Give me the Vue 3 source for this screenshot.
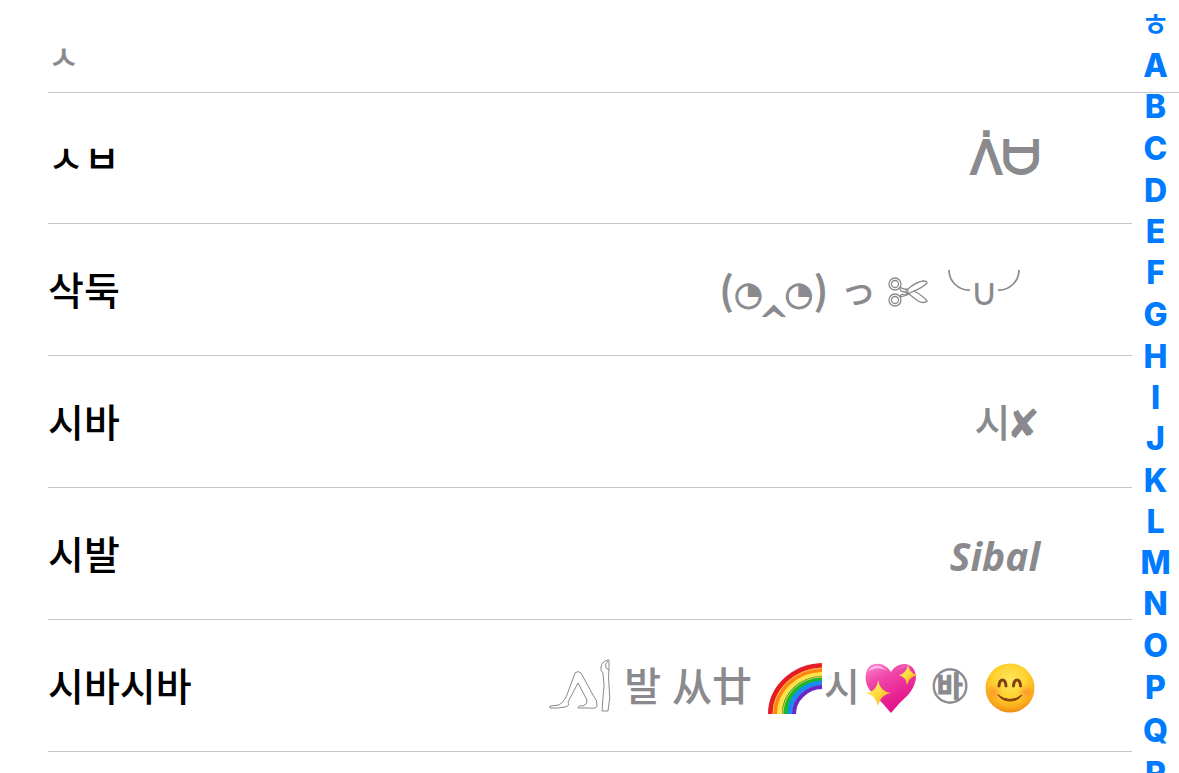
<script setup>
const letters = ['ㅎ', ...'ABCDEFGHIJKLMNOPQR']
const spacing = { C: 'round', G: 'round', O: 'round', J: 'hook', Q: 'tail' }
</script>

<template>
  <main class="page">
    <section class="shortcuts">
      <h2 id="s-group" class="heading">ㅅ</h2>
      <dl class="list" aria-labelledby="s-group">
        <div class="row first">
          <dt>ㅅㅂ</dt>
          <dd><span class="syllabics">ᐲᗨ</span></dd>
        </div>
        <div class="row">
          <dt>삭둑</dt>
          <dd class="face">
            <span class="paren">(</span><span class="eye">◔</span><span class="mouth">‸</span><span class="eye">◔</span><span class="paren">)</span>
            <span class="hand">っ</span>
            <svg class="scissors" viewBox="0 0 40 32" aria-label="✄" role="img">
              <g fill="none" stroke="#8a8a8e" stroke-width="1.3">
                <circle cx="7" cy="8" r="6" /><circle cx="7" cy="8" r="3.5" />
                <circle cx="7" cy="24" r="6" /><circle cx="7" cy="24" r="3.5" />
                <path d="M12 11Q15 14 20 13Q28 6 35 5Q39 5 39 7Q34 12 26 15L18 19Q12 17 12 21" />
                <path d="M12 11Q11 16 17 16L21 18L30 25Q36 28 39 25Q34 19 26 15M12 21Q17 20 21 18" />
                <circle cx="19" cy="16" r="1.3" />
              </g>
            </svg>
            <svg class="arc" viewBox="0 0 22 22" role="img" aria-label="◟"><path d="M1 0A20 20 0 0 0 22 20" fill="none" stroke="#8a8a8e" stroke-width="1.700" /></svg><span class="cup">∪</span><svg class="arc" viewBox="0 0 22 22" role="img" aria-label="◞"><path d="M21 0A20 20 0 0 1 0 20" fill="none" stroke="#8a8a8e" stroke-width="1.700" /></svg>
          </dd>
        </div>
        <div class="row">
          <dt>시바</dt>
          <dd>시<span class="cross">✘</span></dd>
        </div>
        <div class="row">
          <dt>시발</dt>
          <dd><em>Sibal</em></dd>
        </div>
        <div class="row">
          <dt>시바시바</dt>
          <dd>
            <svg class="glyphs" viewBox="0 0 66 54" aria-hidden="true">
              <g fill="none" stroke="#8a8a8e" stroke-width="1">
                <path d="M1 47L10 46Q17 41 19 33L26 14Q29 11 32 14L44 36Q49 42 48 47Q47 50 40 49L29 49Q29 46 34 47Q39 45 38 41L29 24L19 43Q21 47 16 48L9 49H1Z" />
                <path d="M59 1Q53 2 52 8Q51 12 54 14Q56 27 54 38L53 52H59Q62 38 60 26Q59 17 60 11V1ZM59 2Q55 5 57 9L60 11" />
              </g>
            </svg>
            <span class="word">발</span>
            <span class="word">从廿</span>
            <svg class="emoji" viewBox="0 0 61 54" role="img" aria-label="🌈">
              <g fill="none">
                <path d="M8 53A53 48 0 0 1 59 5" stroke="#e51c25" stroke-width="6" />
                <path d="M12 53A49 44 0 0 1 59 9" stroke="#ff8610" stroke-width="5" />
                <path d="M17 53A43 39 0 0 1 59 14" stroke="#ffe14a" stroke-width="6" />
                <path d="M22 53A38 34 0 0 1 59 18" stroke="#18ba25" stroke-width="6" />
                <path d="M27 53A33 30 0 0 1 59 22" stroke="#188cf0" stroke-width="5" />
                <path d="M31 53A29 27 0 0 1 59 26" stroke="#6b26c5" stroke-width="4" />
                <path d="M10 53A51 46 0 0 1 59 7M20 53A40 37 0 0 1 59 16" stroke="#ffb55b" stroke-width="1" />
              </g>
            </svg><span>시</span><svg class="emoji" viewBox="0 0 61 54" role="img" aria-label="💖">
              <defs>
                <linearGradient id="pink" x1="0" y1="0" x2=".5" y2="1"><stop stop-color="#ff87ce" /><stop offset=".35" stop-color="#f047aa" /><stop offset="1" stop-color="#e20d86" /></linearGradient>
                <linearGradient id="spark" x2="1" y2="1"><stop stop-color="#fff58a" /><stop offset=".5" stop-color="#ffdc3c" /><stop offset="1" stop-color="#f39a19" /></linearGradient>
              </defs>
              <path d="M31 52Q23 42 12 32C4 23 4 12 9 6C16 0 26 3 31 11C36 3 47 0 53 7C59 15 55 26 48 34Q38 43 31 52Z" fill="url(#pink)" />
              <path d="M8 11Q12 3 20 5Q25 7 27 10Q18 4 8 11M36 10Q42 4 48 6Q42 5 36 10" fill="#ffb9e3" />
              <path d="M18 19Q20 31 31 32Q20 34 18 45Q16 34 5 32Q17 31 18 19Z" fill="url(#spark)" />
              <path d="M48 3Q49 12 57 14Q49 16 47 24Q46 16 39 14Q47 12 48 3Z" fill="url(#spark)" />
            </svg>
            <span class="circled">㉳</span>
            <svg class="emoji" viewBox="0 0 61 54" role="img" aria-label="😊">
              <defs>
                <radialGradient id="skin" cx=".5" cy=".35" r=".65"><stop stop-color="#ffe85d" /><stop offset=".55" stop-color="#ffd02e" /><stop offset=".85" stop-color="#faaa18" /><stop offset="1" stop-color="#ec8b15" /></radialGradient>
                <radialGradient id="blush"><stop stop-color="#ff713b" stop-opacity=".6" /><stop offset="1" stop-color="#ff9a23" stop-opacity="0" /></radialGradient>
              </defs>
              <circle cx="31" cy="27" r="24.500" fill="url(#skin)" />
              <circle cx="15" cy="31" r="9" fill="url(#blush)" /><circle cx="47" cy="31" r="9" fill="url(#blush)" />
              <g fill="none" stroke="#804111" stroke-linecap="round">
                <path d="M20 25Q20.500 19 23.500 19T27 25M34.500 25Q35 19 38 19T41.500 25" stroke-width="3" />
                <path d="M19 34Q31 43 43 34Q39 40 31 40T19 34Z" fill="#804111" stroke-width="1" />
              </g>
            </svg>
          </dd>
        </div>
      </dl>
    </section>
    <nav class="index" aria-label="Index">
      <a v-for="letter in letters" :key="letter" href="#s-group" :class="spacing[letter]">{{ letter }}</a>
    </nav>
  </main>
</template>

<style>
body {
  margin: 0;
  background: #fff;
}
</style>

<style scoped>
.page {
  position: relative;
  min-height: 100vh;
  overflow: hidden;
  font-family: "Noto Sans CJK KR", "DejaVu Sans", sans-serif;
  color: #000;
}
.shortcuts {
  padding-left: 48px;
}
.heading {
  box-sizing: border-box;
  height: 93px;
  margin: 0;
  padding-top: 22px;
  border-bottom: 1px solid #c6c6c8;
  color: #8a8a8e;
  font-size: 34px;
  font-weight: 500;
  line-height: 68px;
}
.list {
  margin: 0 47px 0 0;
}
.row {
  box-sizing: border-box;
  display: flex;
  align-items: center;
  justify-content: space-between;
  height: 132px;
  padding-right: 92px;
  padding-bottom: 4px;
  border-bottom: 1px solid #c6c6c8;
  font-size: 39px;
  font-weight: 500;
  line-height: 60px;
}
.first {
  height: 131px;
}
dd {
  display: flex;
  align-items: center;
  margin: 0;
  color: #8a8a8e;
}
.syllabics {
  padding-top: 4px;
  font-family: "DejaVu Sans", sans-serif;
  font-size: 46px;
  font-weight: 400;
  -webkit-text-stroke: 2px #8a8a8e;
}
.face {
  padding-right: 20px;
}
.paren {
  font-weight: 700;
}
.eye {
  padding-top: 12px;
  font-family: "DejaVu Sans", sans-serif;
  font-size: 33px;
  -webkit-text-stroke: 1px #8a8a8e;
}
.mouth {
  margin: 0 -6px;
  padding-top: 4px;
  font-family: "DejaVu Sans", sans-serif;
  font-size: 46px;
  font-weight: 700;
}
.hand {
  margin: 0 12px;
  font-size: 36px;
}
.scissors {
  width: 40px;
  height: 32px;
  margin-top: 8px;
  margin-right: 20px;
}
.arc {
  width: 22px;
  height: 22px;
  margin-bottom: 14px;
}
.cup {
  padding-top: 8px;
  font-family: "DejaVu Sans", sans-serif;
  font-size: 38px;
  font-weight: 400;
}
.cross {
  margin-left: -4px;
  padding-top: 8px;
  font-family: "DejaVu Sans", sans-serif;
  font-size: 40px;
  font-weight: 700;
}
em {
  padding-top: 8px;
  font-family: "Open Sans", "Noto Sans", sans-serif;
  font-weight: 700;
}
.glyphs {
  width: 66px;
  height: 54px;
  margin-top: 4px;
  margin-right: 9px;
}
.word {
  margin-right: 11px;
  font-size: 40px;
}
.emoji {
  width: 61px;
  height: 54px;
  margin-top: 8px;
}
.circled {
  margin: 0 11px;
  font-size: 36px;
  -webkit-text-stroke: 1px #8a8a8e;
}
.index {
  position: absolute;
  top: 0;
  right: 0;
  bottom: 0;
  width: 47px;
  padding-top: 4px;
  overflow: hidden;
}
.index a {
  display: block;
  color: #007aff;
  font-family: Inter, "Noto Sans CJK KR", sans-serif;
  font-size: 32px;
  font-weight: 800;
  line-height: 41px;
  text-align: center;
  text-decoration: none;
}
.index a:first-child {
  font-size: 32px;
  font-weight: 500;
}
.index .round {
  line-height: 43px;
}
.index .hook {
  line-height: 42px;
}
.index .tail {
  line-height: 45px;
}
</style>
